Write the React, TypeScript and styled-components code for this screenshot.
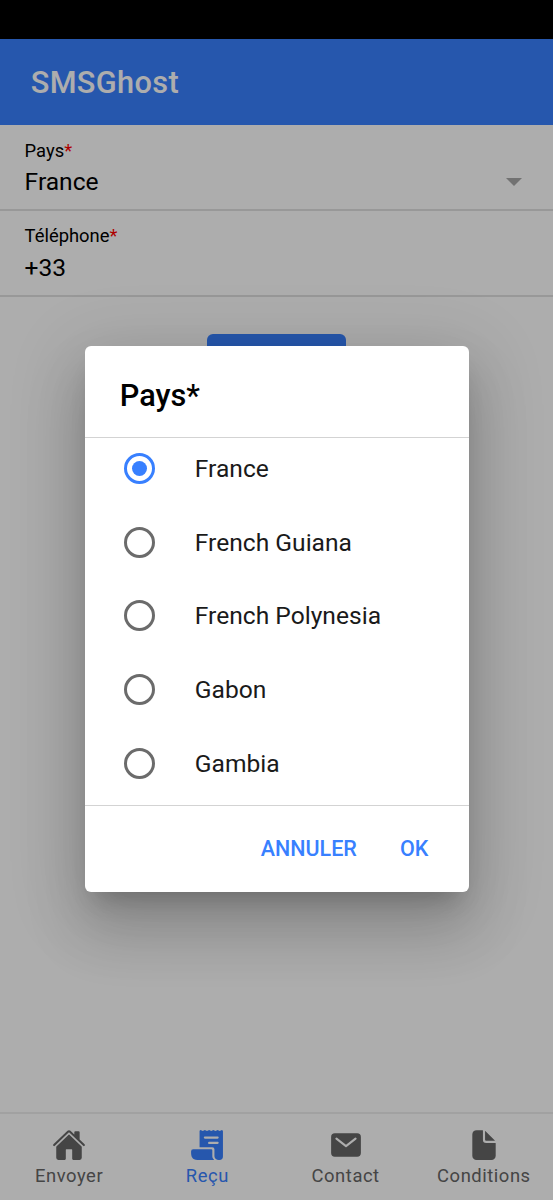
import React, { useState } from "react";
import styled, { createGlobalStyle } from "styled-components";
import { IoDocument, IoHome, IoMail, IoReceipt } from "react-icons/io5";

const GlobalStyle = createGlobalStyle`
  *, *::before, *::after { box-sizing: border-box; }
  body {
    margin: 0;
    font-family: Roboto, "Liberation Sans", sans-serif;
    color: #000;
    background: #fff;
    overflow: hidden;
  }
  button { font: inherit; border: 0; background: none; padding: 0; }
`;

const Screen = styled.div`
  display: flex;
  flex-direction: column;
  height: 1200px;
`;

const StatusBar = styled.div`
  flex: none;
  height: 38.5px;
  background: #000;
`;

const AppArea = styled.div`
  position: relative;
  flex: 1;
  display: flex;
  flex-direction: column;
  overflow: hidden;
`;

const Toolbar = styled.header`
  flex: none;
  display: flex;
  align-items: center;
  height: 86px;
  padding: 2px 30.7px 0;
  background: #3880ff;
`;

const Title = styled.h1`
  margin: 0;
  color: #fff;
  font-size: 30.7px;
  font-weight: 500;
  letter-spacing: 0.38px;
`;

const Content = styled.main`
  flex: 1;
  display: flex;
  flex-direction: column;
`;

const Field = styled.div`
  display: flex;
  flex-direction: column;
  height: 86px;
  padding: 15.1px 31.2px 0 24.6px;
  border-bottom: 2px solid #e0e0e0;

  & + & {
    padding-top: 14.8px;
  }
`;

const FieldLabel = styled.label`
  font-size: 18.4px;
  line-height: 22px;
`;

const Required = styled.span`
  color: #ff0000;
`;

const FieldValue = styled.div`
  display: flex;
  align-items: center;
  justify-content: space-between;
  margin-top: 5.4px;
  font-size: 24.6px;
  line-height: 30px;
`;

const Caret = styled.span`
  border: 8px solid transparent;
  border-top-color: #a8a8a8;
  border-bottom: 0;
`;

const SubmitButton = styled.button`
  align-self: center;
  width: 139px;
  height: 55px;
  margin-top: 37px;
  border-radius: 6px;
  background: #3880ff;
`;

const TabBar = styled.nav`
  flex: none;
  display: flex;
  height: 88px;
  border-top: 2px solid #ededed;
`;

const Tab = styled.button<{ $active?: boolean }>`
  flex: 1;
  display: flex;
  flex-direction: column;
  align-items: center;
  padding-top: 13.5px;
  color: ${(p) => (p.$active ? "#3880ff" : "#666")};
  font-size: 18.4px;
  line-height: 22px;
  letter-spacing: 0.55px;

  svg {
    width: 34px;
    height: 34px;
    margin-bottom: 3.5px;
  }
`;

const Backdrop = styled.div`
  position: absolute;
  inset: 0;
  display: flex;
  align-items: center;
  justify-content: center;
  background: rgba(0, 0, 0, 0.32);
`;

const Dialog = styled.section`
  display: flex;
  flex-direction: column;
  width: 384px;
  height: 546px;
  border-radius: 6px;
  overflow: hidden;
  background: #fff;
  box-shadow:
    0 17px 23px -11px rgba(0, 0, 0, 0.2),
    0 37px 58px 5px rgba(0, 0, 0, 0.14),
    0 14px 71px 12px rgba(0, 0, 0, 0.12);
`;

const DialogTitle = styled.h2`
  flex: none;
  margin: 0;
  padding: 32px 35.3px 0;
  height: 91px;
  font-size: 30.7px;
  line-height: 36px;
  font-weight: 500;
`;

const OptionList = styled.div`
  flex: 1;
  display: flex;
  flex-direction: column;
  overflow: hidden;
  border: solid #d3d3d3;
  border-width: 1.5px 0;
`;

const Option = styled.button`
  flex: none;
  display: flex;
  align-items: center;
  height: 73.8px;
  padding-left: 39.3px;
  gap: 40px;
  font-size: 24.6px;
  color: #1a1a1a;
  text-align: left;

  &:first-child {
    margin-top: -6.9px;
  }
`;

const Radio = styled.span<{ $checked: boolean }>`
  display: flex;
  align-items: center;
  justify-content: center;
  width: 31px;
  height: 31px;
  border: 3px solid ${(p) => (p.$checked ? "#3880ff" : "#6b6b6b")};
  border-radius: 50%;

  &::after {
    content: "";
    width: 15px;
    height: 15px;
    border-radius: 50%;
    background: ${(p) => (p.$checked ? "#3880ff" : "transparent")};
  }
`;

const Actions = styled.footer`
  flex: none;
  display: flex;
  justify-content: flex-end;
  align-items: center;
  gap: 43px;
  height: 86px;
  padding: 0 40.2px 2px 0;
`;

const ActionButton = styled.button`
  color: #3880ff;
  font-size: 21.5px;
  font-weight: 500;
  text-transform: uppercase;
`;

const countries = ["France", "French Guiana", "French Polynesia", "Gabon", "Gambia"];

const tabs = [
  { label: "Envoyer", Icon: IoHome },
  { label: "Reçu", Icon: IoReceipt },
  { label: "Contact", Icon: IoMail },
  { label: "Conditions", Icon: IoDocument },
];

export default function App() {
  const [country, setCountry] = useState("France");

  return (
    <Screen>
      <GlobalStyle />
      <StatusBar />
      <AppArea>
        <Toolbar>
          <Title>SMSGhost</Title>
        </Toolbar>
        <Content>
          <Field>
            <FieldLabel>Pays<Required>*</Required></FieldLabel>
            <FieldValue>France<Caret /></FieldValue>
          </Field>
          <Field>
            <FieldLabel>Téléphone<Required>*</Required></FieldLabel>
            <FieldValue>+33</FieldValue>
          </Field>
          <SubmitButton />
        </Content>
        <TabBar>
          {tabs.map(({ label, Icon }) => (
            <Tab key={label} $active={label === "Reçu"}>
              <Icon />
              {label}
            </Tab>
          ))}
        </TabBar>
        <Backdrop>
          <Dialog role="dialog">
            <DialogTitle>Pays*</DialogTitle>
            <OptionList>
              {countries.map((name) => (
                <Option key={name} onClick={() => setCountry(name)}>
                  <Radio $checked={name === country} />
                  {name}
                </Option>
              ))}
            </OptionList>
            <Actions>
              <ActionButton>Annuler</ActionButton>
              <ActionButton>OK</ActionButton>
            </Actions>
          </Dialog>
        </Backdrop>
      </AppArea>
    </Screen>
  );
}
